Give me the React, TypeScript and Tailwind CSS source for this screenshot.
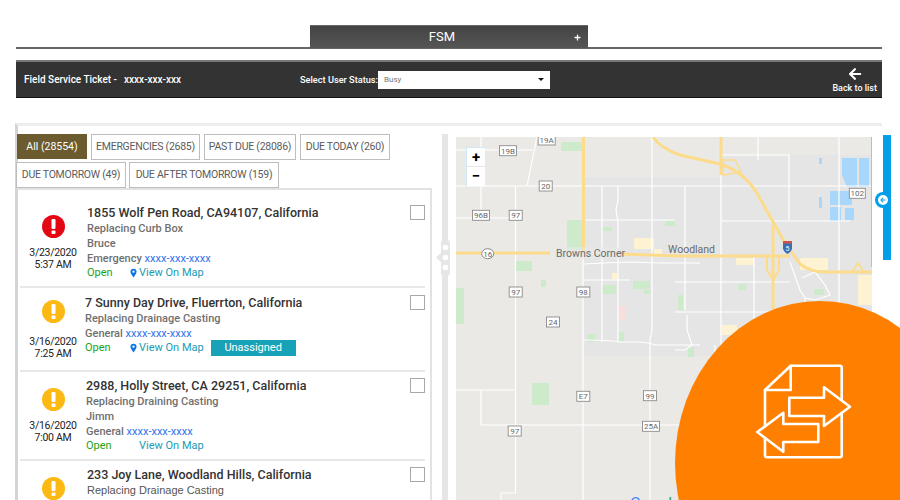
import { FaArrowLeft, FaPlus } from "react-icons/fa";

const font = { fontFamily: "Roboto, 'Noto Sans', sans-serif" };

function Shield({ x, y, t, w = 14 }: { x: number; y: number; t: string; w?: number }) {
  return (
    <g>
      <rect x={x - w / 2} y={y - 5} width={w} height={10} fill="#fff" stroke="#8a8a8a" strokeWidth="0.9" />
      <text x={x} y={y + 3} fontSize="8" textAnchor="middle" fill="#666">{t}</text>
    </g>
  );
}

function MapArt() {
  const white = "#ffffff";
  const yellow = "#fcdc8a";
  const whites = [
    "M481 137V218",
    "M456 218H515",
    "M456 150H533",
    "M537 137L527 186",
    "M515.5 186V493H501V500",
    "M456 186H872",
    "M583 250V500",
    "M602 186V342",
    "M618 186V200L616 210L618 222V342",
    "M652 137V330L650 340V500",
    "M584 220H675",
    "M584 264Q620 262 632 262L660 263H700",
    "M584 280H630",
    "M584 340Q610 340 620 342H640Q650 343 655 345H700",
    "M456 390H515",
    "M481 390V425",
    "M481 425H680",
    "M721 155H789V220",
    "M721 175V500",
    "M721 221H850",
    "M758 130V160",
    "M839 137V272V330",
    "M685 186V310",
    "M675 282H790",
    "M675 312H870",
    "M754 256V330",
    "M790 262L800 290L805 298V325",
    "M802 278L815 272L825 285L830 295L815 300L805 298",
    "M687 315V330L692 345L685 350H675",
    "M715 345V370",
  ];
  return (
    <svg viewBox="456 137 416 363" className="block w-[416px] h-[363px]">
      <rect x="456" y="137" width="416" height="363" fill="#ebe9e5" />
      <path d="M584 177H720V155H872V500H720V356H584Z" fill="#e5e5e5" />
      <g fill="#cdeacb">
        <rect x="561" y="142" width="22" height="9" />
        <rect x="567" y="220" width="16" height="30" />
        <rect x="516" y="261" width="16" height="10" />
        <rect x="541" y="280" width="5" height="7" />
        <rect x="456" y="288" width="8" height="36" />
        <rect x="602" y="227" width="10" height="4" />
        <rect x="602" y="285" width="14" height="9" />
        <rect x="633" y="281" width="17" height="8" />
        <rect x="644" y="290" width="6" height="4" />
        <rect x="665" y="221" width="10" height="5" />
        <rect x="532" y="383" width="17" height="22" />
        <rect x="587" y="334" width="8" height="8" />
        <rect x="618" y="332" width="6" height="10" />
        <rect x="738" y="284" width="8" height="6" />
        <rect x="678" y="295" width="5" height="15" />
        <rect x="814" y="289" width="10" height="6" />
        <rect x="688" y="347" width="6" height="10" />
      </g>
      <g fill="#fdf3d3">
        <rect x="634" y="238" width="20" height="11" />
        <rect x="654" y="249" width="8" height="8" />
        <rect x="612" y="273" width="5" height="6" />
        <rect x="736" y="258" width="18" height="7" />
        <rect x="800" y="258" width="28" height="12" />
        <rect x="858" y="275" width="14" height="30" />
        <rect x="722" y="325" width="15" height="10" />
      </g>
      <rect x="618" y="306" width="8" height="14" fill="#f9dede" />
      <g fill="#a9d6fb">
        <path d="M842 158H857V187H847L842 175Z" />
        <path d="M859 158H869V187H859Z" />
        <rect x="830" y="191" width="14" height="14" />
        <rect x="840" y="191" width="12" height="14" />
        <rect x="830" y="207" width="11" height="14" />
        <rect x="845" y="208" width="9" height="12" />
        <rect x="819" y="158" width="3" height="6" />
        <rect x="819" y="197" width="3" height="11" />
      </g>
      <g fill="none" stroke={white} strokeWidth="1.2">
        {whites.map((d) => <path key={d} d={d} />)}
      </g>
      <g fill="none" stroke={yellow} strokeWidth="3">
        <path d="M583.5 137V253" />
        <path d="M456 253H550M620 254L680 256L790 256" />
        <path d="M653 137Q660 148 680 155L720 164Q745 172 758 195L772 220L785 243L800 264Q810 272 825 272H872" />
        <path d="M721 137V175" />
        <path d="M773 225V312" />
        <path d="M723 160H735L741 172L723 175Z" strokeWidth="1.5" />
        <path d="M767 256V270L773 280L779 270V256" strokeWidth="2" />
        <path d="M852 272L858 263L864 272" strokeWidth="2" />
      </g>
      <Shield x={546.7} y={140} t="19A" w={17} />
      <Shield x={508} y={150.7} t="19B" w={17} />
      <Shield x={545.7} y={186} t="20" w={13} />
      <Shield x={481} y={215.3} t="96B" w={17} />
      <Shield x={515.7} y={215.3} t="97" w={13} />
      <Shield x={515.7} y={292} t="97" w={13} />
      <Shield x={583.3} y={292} t="98" w={13} />
      <Shield x={553} y={322} t="24" w={13} />
      <Shield x={583.3} y={396.3} t="E7" w={13} />
      <Shield x={650} y={395.7} t="99" w={13} />
      <Shield x={651} y={426.3} t="25A" w={17} />
      <Shield x={514.7} y={431} t="97" w={13} />
      <Shield x={857.3} y={193.3} t="102" w={16} />
      <ellipse cx="487.7" cy="253.7" rx="6" ry="5" fill="#fff" stroke="#8a8a8a" />
      <text x="487.7" y="256.5" fontSize="8" textAnchor="middle" fill="#666">16</text>
      <path d="M783 241H792V249Q791 252 787.5 254Q784 252 783 249Z" fill="#3d6fb5" />
      <rect x="783" y="241" width="9" height="2.5" fill="#d0524b" />
      <text x="787.5" y="251" fontSize="7" textAnchor="middle" fill="#fff">5</text>
      <rect x="555" y="247" width="66" height="12" fill="#e8e8e6" opacity="0.6" />
      <text x="556" y="257" fontSize="10.5" fill="#6b6b6b">Browns Corner</text>
      <text x="668" y="253" fontSize="10.5" fill="#6b6b6b">Woodland</text>
      <text x="630" y="509" fontSize="16" fill="#4285f4">G<tspan fill="#ea4335">o</tspan><tspan fill="#fbbc05">o</tspan><tspan fill="#4285f4">g</tspan><tspan fill="#34a853">l</tspan></text>
    </svg>
  );
}

function Alert({ color }: { color: string }) {
  return (
    <svg viewBox="0 0 23 23" className="w-[23px] h-[23px] block">
      <circle cx="11.5" cy="11.5" r="11.5" fill={color} />
      <rect x="9.5" y="4" width="4" height="10" rx="1.2" fill="#fff" />
      <rect x="9.5" y="15.5" width="4" height="3.6" rx="1" fill="#fff" />
    </svg>
  );
}

function Pin() {
  return (
    <svg viewBox="0 0 8 11" className="w-[7px] h-[10px] mr-[2px] inline-block">
      <path d="M4 0.5A3.5 3.5 0 0 1 7.5 4C7.5 6.2 5 9 4 10.5C3 9 0.5 6.2 0.5 4A3.5 3.5 0 0 1 4 0.5ZM4 2.7A1.3 1.3 0 1 0 4 5.3A1.3 1.3 0 1 0 4 2.7Z" fill="#0a78e6" fillRule="evenodd" />
    </svg>
  );
}

function Tab({ label, cls }: { label: string; cls: string }) {
  return (
    <div className={`h-[26px] flex items-center justify-center border border-[#bdbdbd] bg-white text-[10.5px] tracking-tight whitespace-nowrap text-[#5c5c5c] ${cls}`}>
      {label}
    </div>
  );
}

function Check() {
  return <div className="w-[15px] h-[15px] border border-[#a8a8a8] bg-white shrink-0" />;
}

function Title({ t }: { t: string }) {
  return <div className="text-[12.5px] leading-[16px] font-medium text-[#333] whitespace-nowrap">{t}</div>;
}

function Sub({ t }: { t: string }) {
  return <div className="text-[11px] leading-[15px] font-medium text-[#6f6f6f] whitespace-nowrap">{t}</div>;
}

function Phone({ kind }: { kind: string }) {
  return (
    <div className="text-[11px] leading-[15px] text-[#6f6f6f] whitespace-nowrap font-medium">
      {kind} <span className="text-[#2f6fed] font-normal">xxxx-xxx-xxxx</span>
    </div>
  );
}

function Status({ pin, gap, badge, cls = "" }: { pin: boolean; gap: string; badge?: boolean; cls?: string }) {
  return (
    <div className={`flex items-center text-[11px] leading-[14px] whitespace-nowrap ${cls}`}>
      <span className={`text-[#1aa51a] ${gap}`}>Open</span>
      <span className={pin ? "" : "pl-[9px]"}>{pin && <Pin />}</span>
      <span className="text-[#1a9ab5]">View On Map</span>
      {badge && (
        <span className="ml-[7px] w-[85px] h-[16px] bg-[#17a2b8] text-white text-[11px] flex items-center justify-center">Unassigned</span>
      )}
    </div>
  );
}

function DateCol({ color, d, t, iconMb }: { color: string; d: string; t: string; iconMb: string }) {
  return (
    <div className="w-[66px] shrink-0 flex flex-col items-center text-[10.5px] tracking-[-0.3px] leading-[12px] text-[#222]">
      <div className={iconMb}><Alert color={color} /></div>
      <div>{d}</div>
      <div>{t}</div>
    </div>
  );
}

export default function App() {
  return (
    <div className="relative w-[900px] h-[500px] overflow-hidden bg-white" style={font}>
      {/* header tab */}
      <div className="pt-[25px] mx-[16px] w-[866px]">
        <div className="flex justify-center border-b-2 border-[#666] h-[24px]">
          <div className="w-[278px] h-[23px] bg-gradient-to-b from-[#444] to-[#555] relative flex items-center justify-center text-[13px] text-white border-t border-[#666] pr-[14px]">
            FSM
            <FaPlus className="absolute right-[7px] top-[8px] w-[7px] h-[7px]" />
          </div>
        </div>
      </div>

      {/* title bar */}
      <div className="mx-[16px] mt-[11px] w-[866px] h-[38px] bg-[#333] border-t-2 border-t-[#777] border-b border-b-[#111] flex items-center text-white">
        <div className="w-[284px] pl-[8px] text-[10px] font-medium whitespace-nowrap">
          Field Service Ticket -<span className="ml-[7px]">xxxx-xxx-xxx</span>
        </div>
        <div className="w-[78px] text-[9.2px] font-medium whitespace-nowrap">Select User Status:</div>
        <div className="w-[172px] h-[18px] bg-white flex items-center justify-between px-[6px] text-[8px] text-[#777]">
          <span>Busy</span>
          <span className="w-0 h-0 border-x-[3px] border-x-transparent border-t-[3px] border-t-[#111]" />
        </div>
        <div className="ml-auto pr-[5px] flex flex-col items-center leading-none">
          <FaArrowLeft className="w-[14px] h-[14px]" />
          <span className="text-[9px] mt-[3px] font-medium">Back to list</span>
        </div>
      </div>

      {/* body */}
      <div className="mx-[15px] mt-[25px] w-[867px] border-t-[3px] border-t-[#eeeeee] border-l-[3px] border-l-[#d4d4d4] flex h-[380px]">
        {/* left */}
        <div className="w-[415px] -ml-[1px] shrink-0 pt-[8px]">
          <div className="flex">
            <div className="w-[70px] h-[25px] bg-[#6b5b2e] text-white text-[10.5px] flex items-center justify-center">All (28554)</div>
            <Tab label="EMERGENCIES (2685)" cls="w-[109px] ml-[4px]" />
            <Tab label="PAST DUE (28086)" cls="w-[92px] ml-[4px]" />
            <Tab label="DUE TODAY (260)" cls="w-[90px] ml-[4px]" />
          </div>
          <div className="flex mt-[2px] -ml-[1px]">
            <Tab label="DUE TOMORROW (49)" cls="w-[110px]" />
            <Tab label="DUE AFTER TOMORROW (159)" cls="w-[150px] ml-[3px]" />
          </div>
          <div className="border-2 border-[#e2e2e2] border-l-0 h-[330px] overflow-hidden pr-[5px]">
            <div className="h-[98px] ml-[3px] border-b-2 border-[#e8e8e8] flex pt-[15px]">
              <DateCol color="#e30613" d="3/23/2020" t="5:37 AM" iconMb="mt-[10px] mb-[9px]" />
              <div className="pl-[1px] flex-1">
                <Title t="1855 Wolf Pen Road, CA94107, California" />
                <Sub t="Replacing Curb Box" />
                <Sub t="Bruce" />
                <Phone kind="Emergency" />
                <Status pin gap="w-[43px]" />
              </div>
              <Check />
            </div>
            <div className="h-[84px] ml-[3px] border-b-2 border-[#e8e8e8] flex pt-[7px]">
              <DateCol color="#fdb913" d="3/16/2020" t="7:25 AM" iconMb="mt-[5px] mb-[13px]" />
              <div className="flex-1 -ml-[1px]">
                <Title t="7 Sunny Day Drive, Fluerrton, California" />
                <Sub t="Replacing Drainage Casting" />
                <Phone kind="General" />
                <Status pin gap="w-[45px]" badge cls="-mt-[1px]" />
              </div>
              <Check />
            </div>
            <div className="h-[89px] ml-[3px] border-b-2 border-[#e8e8e8] flex pt-[6px]">
              <DateCol color="#fdb913" d="3/16/2020" t="7:00 AM" iconMb="mt-[10px] mb-[9px]" />
              <div className="flex-1">
                <Title t="2988, Holly Street, CA 29251, California" />
                <Sub t="Replacing Draining Casting" />
                <Sub t="Jimm" />
                <Phone kind="General" />
                <Status pin={false} gap="w-[44px]" />
              </div>
              <Check />
            </div>
            <div className="ml-[3px] flex pt-[6px]">
              <DateCol color="#fdb913" d="" t="" iconMb="mt-[10px]" />
              <div className="flex-1 pl-[1px]">
                <Title t="233 Joy Lane, Woodland Hills, California" />
                <div className="text-[11px] leading-[15px] text-[#555]" style={{ fontFamily: "'Liberation Sans', sans-serif" }}>Replacing Drainage Casting</div>
              </div>
              <Check />
            </div>
          </div>
        </div>

        {/* splitter */}
        <div className="relative ml-[10px] mt-[8px] w-[6px] bg-[#e6e6e6] shrink-0">
          <div className="absolute -left-[6px] top-[106px] w-[18px] h-[36px]">
            <svg viewBox="0 0 18 36" className="block w-[18px] h-[36px]">
              <path d="M8 0Q5 0 5 3V13L0 17.5L5 22V33Q5 36 8 36H11Q14 36 14 33V3Q14 0 11 0Z" fill="#e6e6e6" />
              <circle cx="9.5" cy="7.5" r="2.8" fill="#fff" />
              <circle cx="9.5" cy="17.5" r="2.8" fill="#fff" />
              <circle cx="9.5" cy="27.5" r="2.8" fill="#fff" />
            </svg>
          </div>
        </div>

        {/* map */}
        <div className="relative ml-[8px] mt-[11px] w-[416px] shrink-0">
          <MapArt />
          <div className="absolute left-[10px] top-[10px] w-[19px] h-[39px] bg-white flex flex-col items-center text-black border-l border-t border-[#cfe8f5]">
            <div className="h-[19px] w-full flex items-center justify-center border-b border-[#e6e6e6] text-[15px] font-bold leading-none">+</div>
            <div className="h-[19px] w-full flex items-center justify-center text-[15px] font-bold leading-none">−</div>
          </div>
          <div className="absolute right-0 top-0 w-[1px] h-[130px] bg-[#7fd0fa]" />
        </div>

        {/* blue rail */}
        <div className="relative ml-[11px] mt-[9px] w-[8px] h-[125px] bg-[#049fe8] shrink-0">
          <div className="absolute -left-[8px] top-[57px] w-[16px] h-[16px] rounded-full bg-[#049fe8] flex items-center justify-center">
            <div className="w-[10px] h-[10px] rounded-full bg-white flex items-center justify-center">
              <FaArrowLeft className="w-[6px] h-[6px] text-[#049fe8]" />
            </div>
          </div>
        </div>
      </div>

      {/* orange badge */}
      <div className="absolute left-[675px] top-[301px] w-[290px] h-[324px] rounded-[50%] bg-[#ff8000]" />
      <svg viewBox="750 360 108 104" className="absolute left-[750px] top-[360px] w-[108px] h-[104px]" fill="none" stroke="#fff" strokeWidth="2.6" strokeLinejoin="round" strokeLinecap="round">
        <path d="M841.7 399.5V367.5Q841.7 365.7 840 365.7H790.7L765 390V426" />
        <path d="M765 438V455Q765 457.3 767 457.3H840Q841.7 457.3 841.7 455V413" />
        <path d="M790.7 365.7V390H765" />
        <path d="M789.3 397.7H824V387.3L850 406.7L824 426V416H789.3Z" />
        <path d="M818.3 424H783.3V412.7L757.3 432L783.3 451.7V442H818.3Z" />
      </svg>
    </div>
  );
}
